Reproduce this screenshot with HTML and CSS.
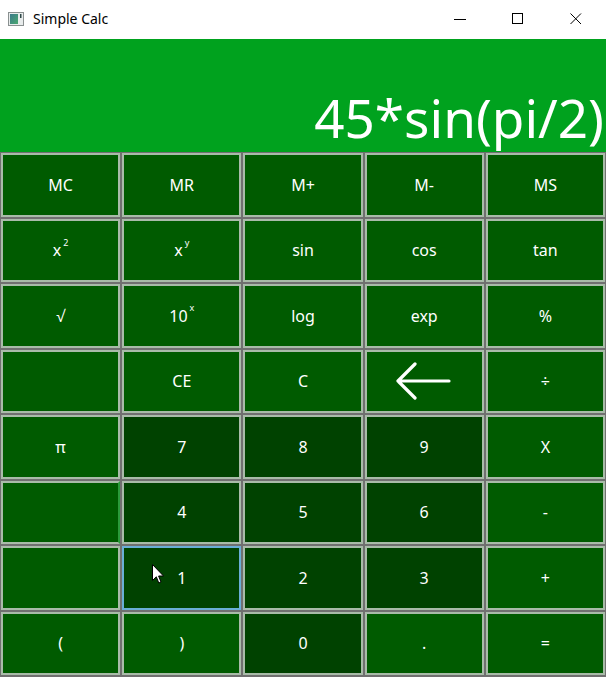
FILE: index.html
```html
<!DOCTYPE html>
<html>
<head>
<meta charset="utf-8">
<link rel="stylesheet" href="styles.css">
</head>
<body>
<div class="window">
  <div class="titlebar">
    <svg class="app-icon" width="16" height="14" viewBox="0 0 16 14">
      <defs>
        <linearGradient id="g" x1="0" y1="0" x2="1" y2="1">
          <stop offset="0" stop-color="#3a7a8a"/>
          <stop offset="1" stop-color="#4aa870"/>
        </linearGradient>
      </defs>
      <rect x="0.5" y="0.5" width="15" height="13" fill="#e8ecec" stroke="#8a9090"/>
      <rect x="2" y="2" width="8" height="10" fill="url(#g)"/>
      <rect x="12" y="2" width="1.5" height="4" fill="#304848"/>
    </svg>
    <span class="title">Simple Calc</span>
    <div class="controls">
      <div class="ctl"><svg width="12" height="12" viewBox="0 0 12 12"><line x1="0" y1="6.5" x2="12" y2="6.5" stroke="#000" stroke-width="1"/></svg></div>
      <div class="ctl"><svg width="12" height="12" viewBox="0 0 12 12"><rect x="0.5" y="0.5" width="10" height="10" fill="none" stroke="#000" stroke-width="1"/></svg></div>
      <div class="ctl"><svg width="12" height="12" viewBox="0 0 12 12"><path d="M0.5 0.5 L11 11 M11 0.5 L0.5 11" stroke="#000" stroke-width="1"/></svg></div>
    </div>
  </div>
  <div class="display"><span class="expr">45*sin(pi/2)</span></div>
  <div class="keys">
    <div class="key">MC</div>
    <div class="key">MR</div>
    <div class="key">M+</div>
    <div class="key">M-</div>
    <div class="key">MS</div>

    <div class="key">x<span class="sup">2</span></div>
    <div class="key">x<span class="sup">y</span></div>
    <div class="key">sin</div>
    <div class="key">cos</div>
    <div class="key">tan</div>

    <div class="key">√</div>
    <div class="key">10<span class="sup">x</span></div>
    <div class="key">log</div>
    <div class="key">exp</div>
    <div class="key">%</div>

    <div class="key"></div>
    <div class="key">CE</div>
    <div class="key">C</div>
    <div class="key"><svg width="56" height="38" viewBox="0 0 56 38"><path d="M2 19 L53 19 M19 2 L2 19 L19 36" fill="none" stroke="#fff" stroke-width="3.2" stroke-linecap="round" stroke-linejoin="round"/></svg></div>
    <div class="key">÷</div>

    <div class="key">π</div>
    <div class="key dark">7</div>
    <div class="key dark">8</div>
    <div class="key dark">9</div>
    <div class="key">X</div>

    <div class="key edge">&nbsp;</div>
    <div class="key dark">4</div>
    <div class="key dark">5</div>
    <div class="key dark">6</div>
    <div class="key">-</div>

    <div class="key"></div>
    <div class="key dark focus">1</div>
    <div class="key dark">2</div>
    <div class="key dark">3</div>
    <div class="key">+</div>

    <div class="key">(</div>
    <div class="key">)</div>
    <div class="key dark">0</div>
    <div class="key">.</div>
    <div class="key">=</div>
  </div>
  <svg class="cursor" width="13" height="21" viewBox="0 0 13 21">
    <path d="M0.5 0.5 L0.5 16.5 L4.3 12.8 L6.8 19 L9 18 L6.6 12 L11.5 12 Z" fill="#fff" stroke="#000" stroke-width="1" stroke-linejoin="miter"/>
  </svg>
</div>
</body>
</html>
```

FILE: styles.css
```css
html, body {
  margin: 0;
  padding: 0;
  background: #ffffff;
}

.window {
  position: relative;
  width: 606px;
  height: 677px;
  display: flex;
  flex-direction: column;
  overflow: hidden;
  font-family: "Noto Sans", "Open Sans", sans-serif;
}

.titlebar {
  height: 39px;
  display: flex;
  align-items: center;
  padding-bottom: 2px;
  box-sizing: border-box;
  background: #ffffff;
}

.app-icon {
  margin-left: 8px;
  margin-right: 9px;
}

.title {
  font-size: 14px;
  color: #000;
}

.controls {
  margin-left: auto;
  display: flex;
  margin-right: 1px;
}

.ctl {
  width: 58px;
  height: 37px;
  display: flex;
  align-items: center;
  justify-content: center;
}

.display {
  height: 113px;
  background: #00a21e;
  display: flex;
  justify-content: flex-end;
  align-items: flex-end;
  padding: 0 2px 8px 0;
  box-sizing: border-box;
}

.expr {
  color: #ffffff;
  font-size: 53px;
  line-height: 1;
}

.keys {
  flex: 1;
  display: grid;
  grid-template-columns: repeat(5, 1fr);
  grid-template-rows: repeat(8, 1fr);
  gap: 2px;
  padding: 1px 1px 2px 1px;
  background: #707070;
}

.key {
  background: #005b00;
  border: 2px solid #a9bba9;
  color: #ffffff;
  font-size: 16px;
  display: flex;
  align-items: center;
  justify-content: center;
  min-width: 0;
  min-height: 0;
}

.key.dark {
  background: #004200;
}

.key.focus {
  border-color: #6aaed6;
}

.key.edge {
  border-right-color: #2a9a3a;
}

.sup {
  font-size: 9px;
  position: relative;
  top: -8px;
  margin-left: 2px;
}

.cursor {
  position: absolute;
  left: 152px;
  top: 564px;
}
```
